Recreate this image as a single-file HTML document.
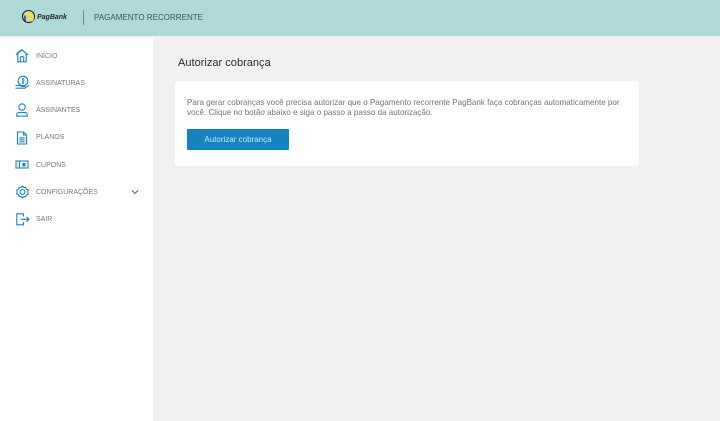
<!DOCTYPE html>
<html><head><meta charset="utf-8">
<style>
html,body{margin:0;padding:0;width:720px;height:421px;overflow:hidden;background:#f1f1f1;font-family:"Liberation Sans",sans-serif}
.a{position:absolute;white-space:nowrap}
#top{left:0;top:0;width:720px;height:36px;background:#aed9d7}
#side{left:0;top:38px;width:153px;height:383px;background:#fff}
.m{left:36px;font-size:7px;color:#7a7a7a;line-height:10px;height:10px}
svg{position:absolute;overflow:visible}
.i{fill:none;stroke:#1a82bd;stroke-width:1.100}
</style></head><body>
<div class="a" id="top"></div>
<div class="a" style="left:0;top:36px;width:720px;height:2px;background:#f1f1f1"></div>
<div class="a" id="side"></div>
<svg style="left:22px;top:10px" width="14" height="14" viewBox="0 0 14 14">
<circle cx="6.500" cy="6.500" r="6" fill="#aed9d7" stroke="#1c1c1c" stroke-width="1.100"/>
<path d="M3.500 4.500A4 4 0 0 1 10.500 4.500L11.500 7.500 9 7.500Q7 4.500 3.500 4.500Z" fill="#f3df4a" stroke="#f3df4a" stroke-width="1.200"/>
<circle cx="9.300" cy="9" r="2.500" fill="#f3df4a"/>
<path d="M3 5.500V11" stroke="#1c1c1c" stroke-width="1.200" fill="none"/>
</svg>
<div class="a" style="left:37px;top:13px;font-size:7px;line-height:10px;font-weight:bold;font-style:italic;color:#1f2a2a">PagBank</div>
<div class="a" style="left:83px;top:10px;width:1px;height:15px;background:#6f8e8d"></div>
<div class="a" style="left:94px;top:12px;font-size:8px;line-height:11px;letter-spacing:.02px;color:#3d5352">PAGAMENTO RECORRENTE</div>

<svg style="left:15px;top:49px" width="14" height="14" viewBox="0 0 14 14"><path class="i" d="M1 5.800L7 1l6 4.800M1.800 4.300L7 .6M2.800 5V12.800h8.400V5M5.300 12.800V8.200Q7 6.800 8.700 8.200v4.600"/></svg>
<svg style="left:15px;top:75px" width="14" height="14" viewBox="0 0 14 14"><circle class="i" cx="8" cy="6" r="4.800"/><path class="i" d="M.5 10.500h4.500l2 1h3.500M.5 13.200h9.500l3.800-3"/><path d="M8 3v6" stroke="#1a82bd" stroke-width="1.400"/></svg>
<svg style="left:15px;top:103px" width="14" height="14" viewBox="0 0 14 14"><circle class="i" cx="7" cy="4" r="3.200"/><path class="i" d="M1.800 13.200v-1.700q0-2 2.500-2h5.400q2.500 0 2.500 2v1.700z"/></svg>
<svg style="left:16px;top:131px" width="12" height="14" viewBox="0 0 12 14"><path class="i" d="M1.500 1h6L10.500 4v9h-9zM7.500 1v3h3M3.300 6.800h5.400M3.300 8.800h5.400M3.300 10.800h5.400"/></svg>
<svg style="left:15px;top:160px" width="14" height="10" viewBox="0 0 14 10"><rect class="i" x="1" y="1" width="12" height="7" stroke-width="1.300"/><path d="M4.500 1v7" stroke="#1a82bd" stroke-width="1"/><rect x="2" y="2" width="1.500" height="5" fill="#cfe4f0"/><rect x="7.500" y="3" width="3" height="3.500" fill="#1a82bd"/></svg>
<svg style="left:16px;top:185px" width="13" height="14" viewBox="0 0 13 14"><path class="i" d="M6.500 1l1.200 1.600 2-.2.800 1.900 1.800.9-.5 1.900.5 1.900-1.800.9-.8 1.900-2-.2L6.500 13l-1.200-1.600-2 .2-.8-1.900-1.800-.9.500-1.900-.5-1.900 1.800-.9.800-1.900 2 .2z"/><circle class="i" cx="6.500" cy="7" r="2.400"/></svg>
<svg style="left:16px;top:213px" width="14" height="13" viewBox="0 0 14 13"><path class="i" d="M7.500 3.500V.8H.8v11h6.700V9M4.500 6.300h8.500M10.500 3.800L13 6.300 10.500 8.800"/></svg>

<div class="a m" style="top:52px">INÍCIO</div>
<div class="a m" style="top:79px">ASSINATURAS</div>
<div class="a m" style="top:106px">ASSINANTES</div>
<div class="a m" style="top:133px">PLANOS</div>
<div class="a m" style="top:161px">CUPONS</div>
<div class="a m" style="top:188px">CONFIGURAÇÕES</div>
<div class="a m" style="top:215px">SAIR</div>
<svg style="left:131px;top:189px" width="8" height="6" viewBox="0 0 8 6"><path d="M1 1.500l3 3 3-3" fill="none" stroke="#666" stroke-width="1.100"/></svg>

<div class="a" style="left:178px;top:56px;font-size:11.050px;line-height:14px;color:#2b2b2b">Autorizar cobrança</div>
<div class="a" style="left:175px;top:81px;width:464px;height:85px;background:#fff;border-radius:3px"></div>
<div class="a" style="left:187px;top:98px;font-size:8.050px;line-height:10px;color:#747474">Para gerar cobranças você precisa autorizar que o Pagamento recorrente PagBank faça cobranças automaticamente por<br>você. Clique no botão abaixo e siga o passo a passo da autorização.</div>
<div class="a" style="left:187px;top:129px;width:102px;height:21px;background:#1483bf;border-radius:1px;color:#cfe6f2;font-size:8px;line-height:22px;text-align:center">Autorizar cobrança</div>
</body></html>
